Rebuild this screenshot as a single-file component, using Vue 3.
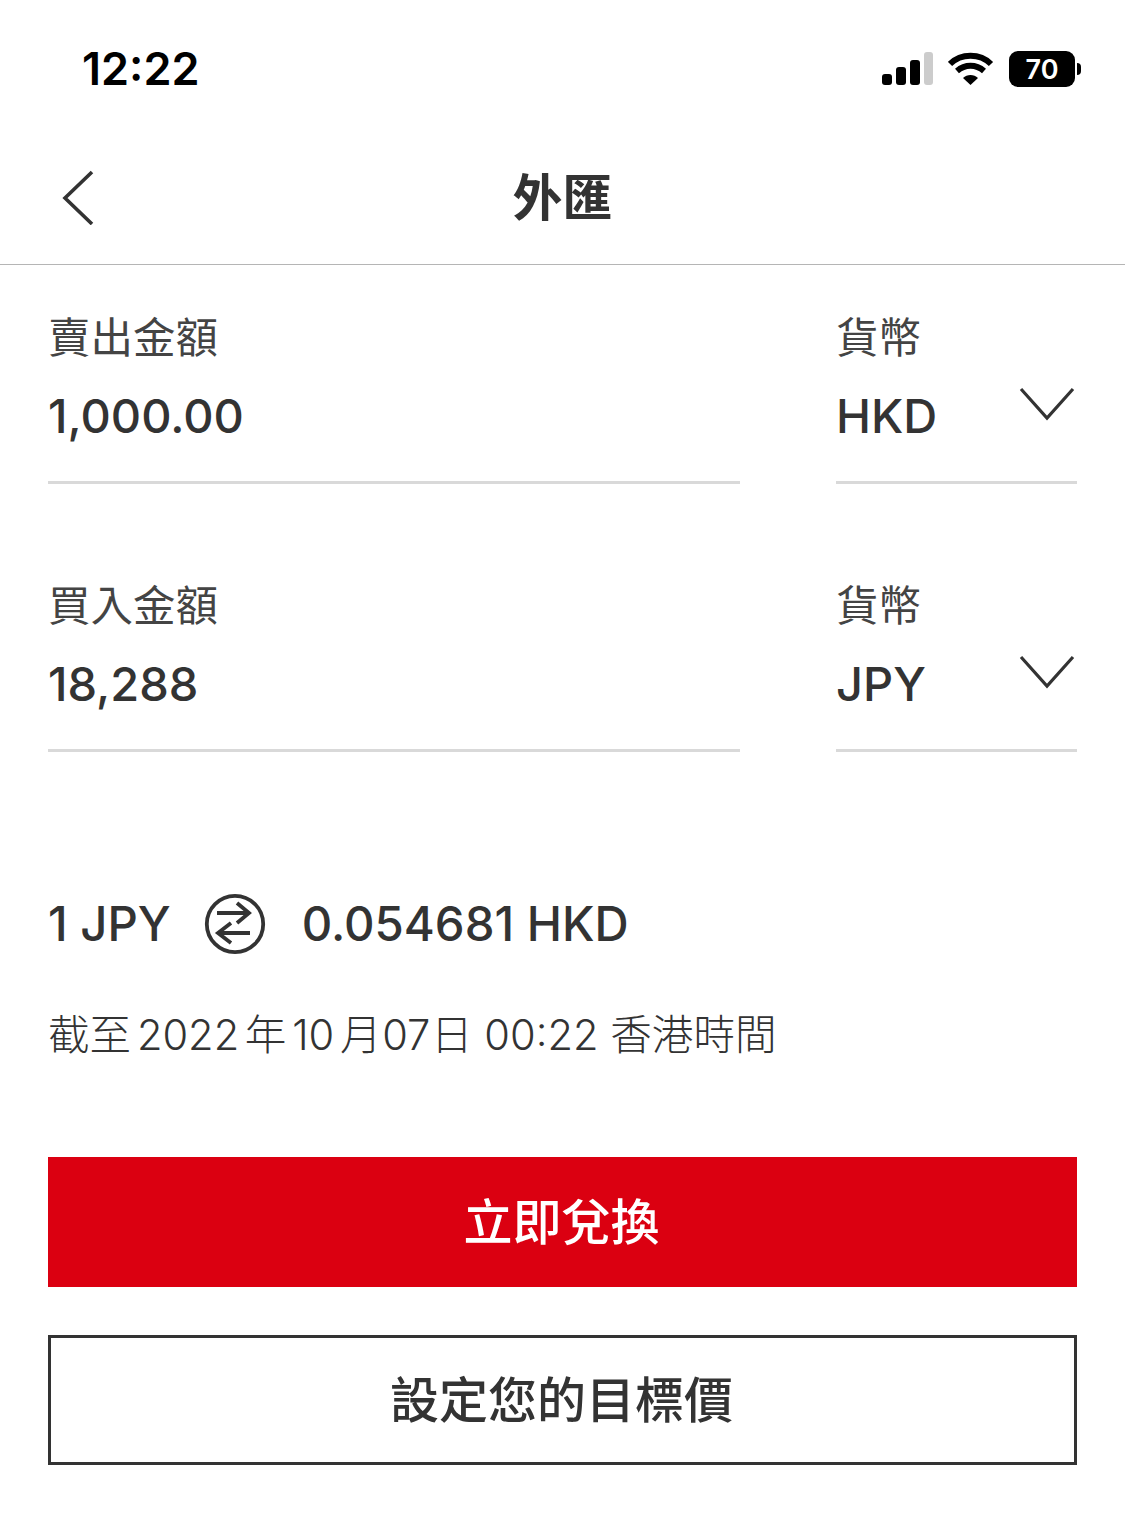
<script setup>
const fields = [
  { label: '賣出金額', amount: '1,000.00', currency: 'HKD' },
  { label: '買入金額', amount: '18,288', currency: 'JPY' },
]
</script>

<template>
  <div class="page">
    <div class="status">
      <span class="time">12:22</span>
      <div class="status-icons">
        <svg class="signal" width="52" height="34" viewBox="0 0 52 34">
          <rect x="0" y="22" width="10" height="11" rx="3" fill="#000" />
          <rect x="14" y="15" width="10" height="18" rx="3" fill="#000" />
          <rect x="28" y="8" width="10" height="25" rx="3" fill="#000" />
          <rect x="42" y="0" width="9" height="33" rx="3" fill="#ccc" />
        </svg>
        <svg class="wifi" width="46" height="34" viewBox="0 0 46 34">
          <path d="M2 12 C13 1 32 1 43 12 M9 19 C17 12 28 12 36 19" fill="none" stroke="#000" stroke-width="6" />
          <path d="M15 26 C19 22 26 22 30 26 L22.5 33 Z" fill="#000" />
        </svg>
        <div class="battery"><span>70</span></div>
        <i class="nub"></i>
      </div>
    </div>

    <header class="nav">
      <svg class="back" width="34" height="56" viewBox="0 0 34 56">
        <path d="M32 3 L5 29 L32 55" fill="none" stroke="#333" stroke-width="3.6" />
      </svg>
      <h1>外匯</h1>
    </header>

    <main class="content">
      <div v-for="f in fields" :key="f.label" class="field-row">
        <div class="field">
          <div class="label">{{ f.label }}</div>
          <div class="value">{{ f.amount }}</div>
        </div>
        <div class="field currency">
          <div class="label">貨幣</div>
          <div class="value">{{ f.currency }}</div>
          <svg class="chev" width="56" height="34" viewBox="0 0 56 34">
            <path d="M2 2 L28 31 L54 2" fill="none" stroke="#333" stroke-width="3.2" />
          </svg>
        </div>
      </div>

      <div class="rate">
        <span>1 JPY</span>
        <svg class="swap" width="62" height="62" viewBox="0 0 62 62">
          <circle cx="31" cy="31" r="28.2" fill="none" stroke="#333" stroke-width="3.8" />
          <path d="M13 20 H45 M33 10 L45 20 L33 30 M46 40 H14 M27 30 L14 40 L27 50" fill="none" stroke="#333" stroke-width="3.8" />
        </svg>
        <span>0.054681 HKD</span>
      </div>

      <p class="stamp"><span class="tight">截至 2022 年 10 月</span><span class="tighter"> 07 日</span> 00:22 香港時間</p>

      <button class="btn primary"><span>立即兌換</span></button>
      <button class="btn outline"><span>設定您的目標價</span></button>
    </main>
  </div>
</template>

<style>
html,
body {
  margin: 0;
  background: #fff;
}
</style>

<style scoped>
.page {
  width: 1125px;
  height: 1516px;
  overflow: hidden;
  background: #fff;
  color: #333;
  font-family: Inter, "Noto Sans CJK TC", sans-serif;
}

.status {
  height: 132px;
  box-sizing: border-box;
  padding: 40px 44px 0 82px;
  display: flex;
  justify-content: space-between;
  align-items: flex-start;
}
.time {
  font-size: 45px;
  line-height: 58px;
  font-weight: 600;
  color: #000;
}
.status-icons {
  display: flex;
  align-items: center;
  margin-top: 10px;
  height: 38px;
}
.wifi {
  margin-left: 14px;
}
.battery {
  width: 66px;
  height: 36px;
  margin-left: 15px;
  border-radius: 9px;
  background: #000;
  display: flex;
  align-items: center;
  justify-content: center;
}
.battery span {
  color: #fff;
  font-size: 27px;
  font-weight: 600;
}
.nub {
  width: 4px;
  height: 12px;
  margin-left: 2px;
  border-radius: 0 6px 6px 0;
  background: #000;
}

.nav {
  position: relative;
  height: 133px;
  box-sizing: border-box;
  border-bottom: 1px solid #b5b5b5;
  display: flex;
  align-items: center;
  justify-content: center;
}
.nav h1 {
  margin: 0 0 8px;
  font-size: 50px;
  font-weight: 700;
  color: #333;
}
.back {
  position: absolute;
  left: 60px;
  top: 37px;
}

.content {
  padding: 0 48px;
}
.field-row {
  display: flex;
  gap: 96px;
  height: 268px;
}
.field {
  flex: 1;
  height: 219px;
  box-sizing: border-box;
  border-bottom: 3px solid #d9d9d9;
  padding-top: 44px;
}
.currency {
  position: relative;
  flex: 0 0 241px;
}
.label {
  font-size: 42.5px;
  line-height: 58px;
  color: #444;
}
.value {
  margin-top: 21px;
  font-size: 47px;
  line-height: 56px;
  font-weight: 500;
  color: #333;
}
.chev {
  position: absolute;
  right: 2px;
  top: 122px;
}

.rate {
  margin-top: 91px;
  padding-bottom: 1px;
  display: flex;
  align-items: center;
  font-size: 47.3px;
  line-height: 62px;
  font-weight: 500;
}
.swap {
  margin: 1px 36px 0 33px;
}
.stamp {
  margin: 49px 0 0;
  font-size: 41.6px;
  line-height: 60px;
  font-weight: 300;
  color: #333;
  white-space: nowrap;
}
.tight {
  word-spacing: -6px;
}
.tighter {
  word-spacing: -11px;
}

.btn {
  display: block;
  width: 100%;
  height: 130px;
  box-sizing: border-box;
  padding: 0 2px 7px 0;
  font-family: inherit;
  font-size: 49px;
  font-weight: 500;
}
.primary {
  margin-top: 92px;
  border: 0;
  background: #db0011;
  color: #fff;
}
.outline {
  margin-top: 48px;
  border: 3px solid #333;
  background: #fff;
  color: #333;
}
</style>
